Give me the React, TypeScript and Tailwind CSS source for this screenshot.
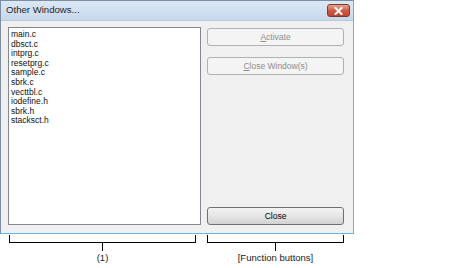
const files = [
  "main.c",
  "dbsct.c",
  "intprg.c",
  "resetprg.c",
  "sample.c",
  "sbrk.c",
  "vecttbl.c",
  "iodefine.h",
  "sbrk.h",
  "stacksct.h",
];

const ui = { fontFamily: '"Liberation Sans", Arial, sans-serif' };

function DisabledButton({ hot, rest }: { hot: string; rest: string }) {
  return (
    <div className="h-[18px] w-full rounded-[3px] border border-[#adb2b5] bg-[#f4f4f4] flex items-center justify-center text-[8.5px] text-[#8d8d8d]">
      <span>
        <span className="underline">{hot}</span>
        {rest}
      </span>
    </div>
  );
}

function Bracket({ width, label }: { width: string; label: string }) {
  return (
    <div className={`flex flex-col items-center ${width}`}>
      <div className="h-[8px] w-full border-l border-r border-b border-black" />
      <div className="h-[8px] w-px bg-black" />
      <div className="mt-[1px] text-[9.5px] leading-[12px] text-[#1a1a1a]">{label}</div>
    </div>
  );
}

export default function App() {
  return (
    <div className="w-[474px] h-[268px] bg-white" style={ui}>
      <div className="w-[354px] h-[234px] flex flex-col border border-[#7d8ea3] border-r-[#55bfe3] border-b-[#55bfe3] bg-[#f0f0f0]">
        {/* title bar */}
        <div className="h-[20px] flex items-start justify-between bg-gradient-to-b from-[#dde8f5] to-[#c7d8ec] border-b border-[#b9c9dc]">
          <span className="pl-[5px] pt-[3px] text-[9.6px] leading-[12px] text-[#1e1e1e]">Other Windows...</span>
          <div className="mt-[3px] mr-[3px] w-[23px] h-[13px] rounded-[3px] border border-[#7a3a30] bg-gradient-to-b from-[#e8a492] via-[#cf5c45] to-[#c0442e] flex items-center justify-center">
            <svg width="9" height="8" viewBox="0 0 9 8">
              <path d="M1.5 1 L7.5 7 M7.5 1 L1.5 7" stroke="#ffffff" strokeWidth="2" strokeLinecap="square" />
            </svg>
          </div>
        </div>
        {/* client */}
        <div className="flex-1 flex pl-[7px] pr-[9px] pt-[6px] pb-[8px] gap-[6px]">
          <div className="w-[193px] h-full border border-[#828790] bg-white pl-[2px] pt-[2px]">
            {files.map((f) => (
              <div key={f} className="text-[8.5px] leading-[9.6px] text-[#111]">
                {f}
              </div>
            ))}
          </div>
          <div className="w-[137px] flex flex-col pt-[1px]">
            <DisabledButton hot="A" rest="ctivate" />
            <div className="h-[11px]" />
            <DisabledButton hot="C" rest="lose Window(s)" />
            <div className="mt-auto h-[18px] w-full rounded-[3px] border border-[#707070] bg-gradient-to-b from-[#f2f2f2] via-[#e6e6e6] to-[#d2d2d2] flex items-center justify-center text-[8.5px] text-black">
              Close
            </div>
          </div>
        </div>
      </div>
      {/* annotations */}
      <div className="flex pl-[9px] pt-[1px]">
        <Bracket width="w-[187px]" label="(1)" />
        <div className="w-[11px]" />
        <Bracket width="w-[137px]" label="[Function buttons]" />
      </div>
    </div>
  );
}
